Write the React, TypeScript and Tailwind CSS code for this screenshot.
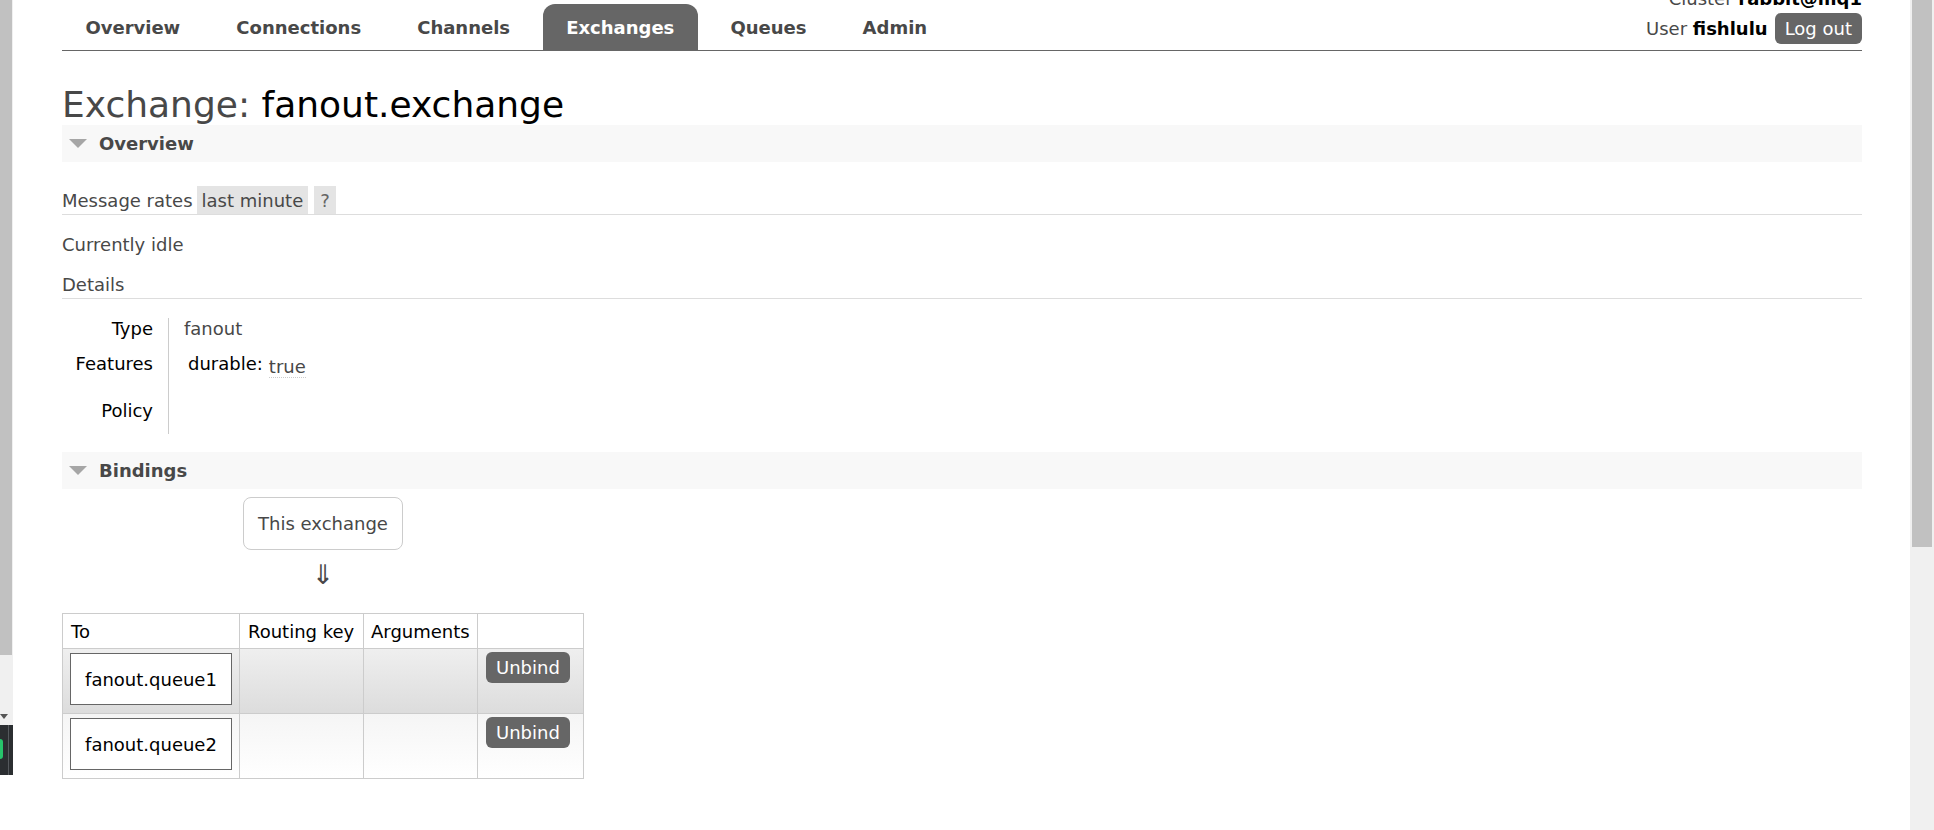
const tabs = ['Overview', 'Connections', 'Channels', 'Exchanges', 'Queues', 'Admin'];

function SectionBar({ title }: { title: string }) {
    return (
        <div className="flex h-[37px] items-center bg-[#f8f8f8]">
            {/* collapse arrow */}
            <svg width="18" height="9" viewBox="0 0 18 9" className="ml-[7px] mr-[12px]">
                <polygon points="0,0 18,0 9,9" fill="#a6a6a6" />
            </svg>
            <span className="font-bold">{title}</span>
        </div>
    );
}

function QueueRow({ name, alt }: { name: string; alt: boolean }) {
    const rowBg = alt
        ? 'bg-linear-to-b from-[#efefef] to-[#dcdcdc]'
        : 'bg-linear-to-b from-[#f5f5f5] to-[#ffffff]';
    return (
        <tr className={rowBg}>
            <td className="border border-[#ccc] px-[7px] pt-[4px] pb-[8px] align-top">
                <div className="w-[162px] border border-[#666] bg-white py-[14.5px] text-center text-black">{name}</div>
            </td>
            <td className="border border-[#ccc]"></td>
            <td className="border border-[#ccc]"></td>
            <td className="border border-[#ccc] px-[8px] pt-[3px] align-top">
                <button className="rounded-[6px] bg-[#666] px-[10px] py-[5px] leading-[21px] text-white">Unbind</button>
            </td>
        </tr>
    );
}

export default function App() {
    return (
        <div className="flex h-[830px] w-[1934px] overflow-hidden bg-white font-['DejaVu_Sans',Verdana,sans-serif] text-[18px] leading-[21px] text-[#484848]">
            {/* edge of the window behind */}
            <div className="flex w-[13px] shrink-0 flex-col">
                <div className="flex h-[655px] bg-[#f0f0f0]">
                    <div className="w-[12px] bg-[#c1c1c1]"></div>
                </div>
                <div className="flex h-[70px] flex-col justify-end bg-[#f0f0f0] pb-[6px]">
                    <svg width="8" height="5" viewBox="0 0 8 5">
                        <polygon points="0,0 8,0 4,5" fill="#555" />
                    </svg>
                </div>
                <div className="relative h-[50px] bg-[#2b2e31]">
                    <div className="absolute left-0 top-[14px] h-[20px] w-[3px] rounded-r-full bg-[#27c46b]"></div>
                    <div className="absolute left-[8px] top-0 h-full w-[1px] bg-[#55595d]"></div>
                </div>
            </div>

            <div className="flex-1 pl-[49px] pr-[48px]">
                {/* header with tabs and user box */}
                <div className="flex items-start justify-between border-b border-[#666] pt-[4px]">
                    <ul className="flex">
                        {tabs.map((t) => (
                            <li key={t} className="mr-[9.3px]">
                                <a
                                    className={
                                        t === 'Exchanges'
                                            ? 'block rounded-t-[12px] bg-[#666] px-[23.4px] py-[12.6px] font-bold text-white'
                                            : 'block px-[23.4px] py-[12.6px] font-bold text-[#484848]'
                                    }
                                >
                                    {t}
                                </a>
                            </li>
                        ))}
                    </ul>
                    <div className="-mt-[16px] flex flex-col items-end gap-[4px]">
                        <div>
                            Cluster <b className="font-bold text-black">rabbit@mq1</b>
                        </div>
                        <div className="flex items-center">
                            <span>
                                User <b className="font-bold text-black">fishlulu</b>
                            </span>
                            <button className="ml-[7px] rounded-[6px] bg-[#666] px-[10px] py-[5px] leading-[21px] text-white">Log out</button>
                        </div>
                    </div>
                </div>

                <h1 className="mt-[33px] text-[36px] leading-[41px] font-normal">
                    Exchange: <b className="font-normal text-black">fanout.exchange</b>
                </h1>

                <SectionBar title="Overview" />

                <div className="mt-[24px] flex items-center gap-[4px] border-b border-[#ddd]">
                    <span>Message rates</span>
                    <span className="bg-[#e4e4e4] px-[5px] py-[3.5px]">last minute</span>
                    <span className="ml-[2px] bg-[#e4e4e4] px-[6px] py-[3.5px] text-[#666]">?</span>
                </div>

                <div className="mt-[19px]">Currently idle</div>
                <div className="mt-[19px] border-b border-[#ddd] pb-[3px]">Details</div>

                {/* facts */}
                <div className="mt-[19px] grid grid-cols-[107px_auto] justify-start">
                    <div className="h-[35px] border-r border-[#ccc] pr-[15px] text-right text-black">Type</div>
                    <div className="pl-[15px]">fanout</div>
                    <div className="h-[47px] border-r border-[#ccc] pr-[15px] text-right text-black">Features</div>
                    <div className="flex items-start pl-[19px]">
                        <span className="text-black">durable:</span>
                        <abbr className="ml-[6px] mt-[3px] border-b border-dotted border-[#ccc] no-underline">true</abbr>
                    </div>
                    <div className="h-[34px] border-r border-[#ccc] pr-[15px] text-right text-black">Policy</div>
                    <div className="pl-[15px]"></div>
                </div>

                <div className="mt-[18px]">
                    <SectionBar title="Bindings" />
                </div>

                <div className="ml-[181px] mt-[8px] w-[160px]">
                    <div className="rounded-[8px] border border-[#ccc] py-[15px] text-center">This exchange</div>
                    <div className="mt-[4px] flex h-[40px] items-center justify-center text-[27px] leading-none">⇓</div>
                </div>

                <table className="mt-[19px] table-fixed border-collapse border border-[#ccc]">
                    <colgroup>
                        <col className="w-[177px]" />
                        <col className="w-[124px]" />
                        <col className="w-[114px]" />
                        <col className="w-[106px]" />
                    </colgroup>
                    <thead>
                        <tr className="bg-white">
                            <th className="border border-[#ccc] px-[8px] py-[6.5px] text-left font-normal text-black">To</th>
                            <th className="border border-[#ccc] px-[8px] py-[6.5px] text-left font-normal text-black">Routing key</th>
                            <th className="border border-[#ccc] px-[7px] py-[6.5px] text-left font-normal text-black">Arguments</th>
                            <th className="border border-[#ccc] px-[8px] py-[6.5px]"></th>
                        </tr>
                    </thead>
                    <tbody>
                        <QueueRow name="fanout.queue1" alt={true} />
                        <QueueRow name="fanout.queue2" alt={false} />
                    </tbody>
                </table>
            </div>

            {/* page scrollbar */}
            <div className="w-[24px] shrink-0 bg-[#f0f0f0] pl-[2px] pr-[2px]">
                <div className="h-[547px] bg-[#c1c1c1]"></div>
            </div>
        </div>
    );
}
